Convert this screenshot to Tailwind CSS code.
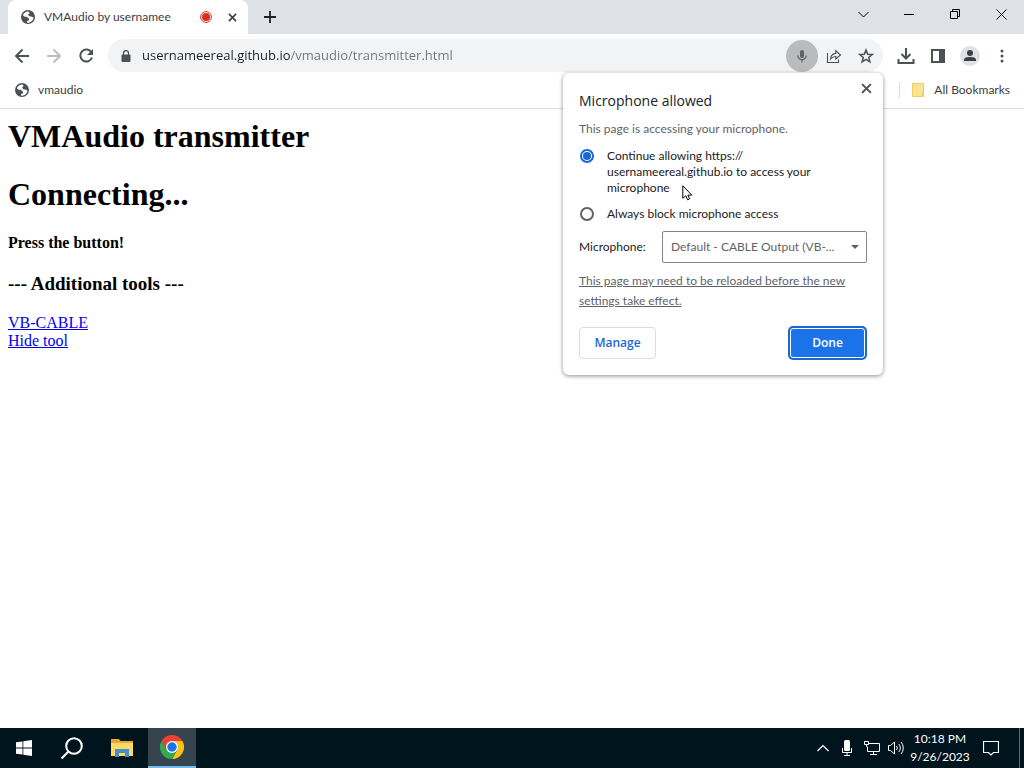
<!DOCTYPE html>
<html lang="en">
<head>
  <meta charset="UTF-8">
  <meta name="viewport" content="width=device-width, initial-scale=1.0">
  <title>VMAudio by usernamee</title>
  <script src="https://cdn.jsdelivr.net/npm/@tailwindcss/browser@4"></script>
</head>
<body class="min-h-screen flex flex-col bg-white font-['Lato','Open_Sans',sans-serif] text-xs text-[#3c4043]">

  <!-- Icons used more than once -->
  <svg class="hidden">
    <symbol id="globe" viewBox="0 0 16 16">
      <circle cx="8" cy="8" r="7" fill="#4d5156"/>
      <path d="M7.500 2.600c-2 .3-3.800 1.700-4.600 3.600l1.700 1.500h2.600l.6 1.300 1.500.8-.6 1.700-1.600.5-.2 1.600c3.300.4 6.300-1.800 6.600-5.200L11 7.600l-1.700-.3L8 5.600l1.500-1.300L9 2.700z" fill="#fff"/>
      <path d="M2.400 8.200c0 2.400 1.400 4.300 3.400 5.100l.2-2-1.600-1.200z" fill="#4d5156"/>
    </symbol>
    <symbol id="cross" viewBox="0 0 10 10">
      <path d="M1 1l8 8M9 1l-8 8" fill="none" stroke="currentColor" stroke-width="1.800"/>
    </symbol>
  </svg>

  <!-- Tab strip -->
  <header class="flex h-[34px] bg-[#dee1e6]">
    <div class="ml-2 flex w-60 items-center rounded-t-lg bg-white pl-3 pr-2">
      <svg class="size-4"><use href="#globe"/></svg>
      <span class="ml-2 flex-1 whitespace-nowrap">VMAudio by usernamee</span>
      <svg class="size-3" viewBox="0 0 12 12"><circle cx="6" cy="6" r="5.400" fill="none" stroke="#d93025"/><circle cx="6" cy="6" r="4" fill="#d93025"/></svg>
      <button class="ml-3 grid size-4 place-items-center" aria-label="Close tab"><svg class="size-[9px]"><use href="#cross"/></svg></button>
    </div>
    <button class="ml-3 grid w-5 place-items-center" aria-label="New tab">
      <svg class="size-3" viewBox="0 0 12 12"><path d="M6 0v12M0 6h12" stroke="#202124" stroke-width="1.800"/></svg>
    </button>
    <div class="ml-auto flex h-7 text-black">
      <button class="grid w-[46px] place-items-center" aria-label="Search tabs"><svg class="size-[11px]" viewBox="0 0 11 11"><path d="M.5 3l5 5 5-5" fill="none" stroke="currentColor"/></svg></button>
      <button class="grid w-[46px] place-items-center" aria-label="Minimize"><svg class="size-[10px]" viewBox="0 0 10 10"><path d="M0 5.500h10" stroke="currentColor"/></svg></button>
      <button class="grid w-[46px] place-items-center" aria-label="Restore"><svg class="size-[10px]" viewBox="0 0 10 10"><path d="M.5 2.500h7v7h-7zM2.500 2.500v-2h7v7h-2" fill="none" stroke="currentColor"/></svg></button>
      <button class="grid w-[46px] place-items-center" aria-label="Close"><svg class="size-[11px]" viewBox="0 0 11 11"><path d="M.5.5l10 10M10.500.5l-10 10" stroke="currentColor"/></svg></button>
    </div>
  </header>

  <!-- Toolbar -->
  <div class="flex h-[43px] items-center pl-3 text-[#4d5156]">
    <div class="flex gap-3">
      <button aria-label="Back"><svg class="size-5" viewBox="0 0 20 20"><path d="M17 10H4M10.500 3.500L4 10l6.500 6.500" fill="none" stroke="currentColor" stroke-width="1.900"/></svg></button>
      <button aria-label="Forward" class="text-[#babcbe]"><svg class="size-5" viewBox="0 0 20 20"><path d="M3 10h13M9.500 3.500L16 10l-6.500 6.500" fill="none" stroke="currentColor" stroke-width="1.900"/></svg></button>
      <button aria-label="Reload"><svg class="size-5" viewBox="0 0 20 20"><path d="M15.500 6.500A6 6 0 1 0 16 11.500" fill="none" stroke="currentColor" stroke-width="2"/><path d="M17 3v6h-6z" fill="currentColor"/></svg></button>
    </div>

    <div class="relative ml-3 flex h-[33px] flex-1 items-center rounded-full bg-[#f1f3f4] pl-3 pr-[9px]">
      <svg class="size-3" viewBox="0 0 12 12"><path d="M3.500 5V3.200a2.500 2.500 0 0 1 5 0V5" fill="none" stroke="currentColor" stroke-width="1.300"/><rect x="1.500" y="4.500" width="9" height="7.500" rx="1" fill="currentColor"/></svg>
      <input type="text" aria-label="Address" value="usernameereal.github.io/vmaudio/transmitter.html" class="ml-2.5 min-w-0 flex-1 bg-[linear-gradient(90deg,#202124_149px,#70757a_149px)] bg-clip-text font-['Open_Sans',sans-serif] text-[13px] text-transparent outline-none">
      <button class="grid size-8 place-items-center rounded-full bg-[#b9bbbc] text-[#5f6368]" aria-label="Microphone"><svg class="size-4" viewBox="0 0 16 16"><rect x="6" y="2" width="4" height="8" rx="2" fill="currentColor"/><path d="M3.800 7.500a4.200 4.200 0 0 0 8.400 0M8 11.700V14.500" fill="none" stroke="currentColor" stroke-width="1.200"/></svg></button>
      <button class="ml-2 grid size-4 place-items-center" aria-label="Share"><svg class="size-4" viewBox="0 0 16 16"><path d="M1.500 5v9.500h11V11.500M4.500 11c.3-3.600 2-5.400 5.300-5.600V2.800L14.500 7 9.800 11V8.500C7.500 8.500 6 9.200 4.500 11z" fill="none" stroke="currentColor" stroke-width="1.100"/></svg></button>
      <button class="ml-4 grid size-4 place-items-center" aria-label="Bookmark"><svg class="size-4" viewBox="0 0 16 16"><path d="M8 2l1.700 4.200 4.500.3-3.500 2.900 1.200 4.400L8 11.400l-3.900 2.400 1.200-4.400L1.800 6.500l4.500-.3z" fill="none" stroke="currentColor" stroke-width="1.500"/></svg></button>

      <!-- Permission bubble -->
      <section class="absolute right-0 top-[34px] z-10 w-80 rounded-md bg-white p-4 text-[#202124] shadow-[0_1px_4px_rgba(0,0,0,0.450)]">
        <button class="absolute right-[11px] top-2.5 text-[#4d5156]" aria-label="Close"><svg class="size-[11px]"><use href="#cross"/></svg></button>
        <h2 class="font-['Open_Sans',sans-serif] text-sm leading-6">Microphone allowed</h2>
        <p class="mt-1.5 leading-5 text-[#5f6368]">This page is accessing your microphone.</p>
        <label class="mt-[9px] flex gap-3 leading-4">
          <input type="radio" name="access" checked class="m-px grid size-3.5 shrink-0 appearance-none place-items-center rounded-full border-2 border-[#5f6368] before:size-2 before:rounded-full checked:border-[#1967d2] checked:before:bg-[#1967d2]">
          <span>Continue allowing https://<br>usernameereal.github.io to access your<br>microphone</span>
        </label>
        <label class="mt-2.5 flex gap-3 leading-4">
          <input type="radio" name="access" class="m-px size-3.5 shrink-0 appearance-none rounded-full border-2 border-[#5f6368]">
          <span>Always block microphone access</span>
        </label>
        <div class="mt-[9px] flex items-center justify-between">
          <label for="mic">Microphone:</label>
          <div class="relative w-[205px]">
            <select id="mic" class="h-8 w-full appearance-none rounded-xs border border-[#80868b] bg-white px-2 text-[#5f6368]">
              <option>Default - CABLE Output (VB-...</option>
            </select>
            <svg class="pointer-events-none absolute right-2 top-3.5 h-1 w-2" viewBox="0 0 8 4"><path d="M0 0h8L4 4z" fill="#5f6368"/></svg>
          </div>
        </div>
        <p class="mt-2 leading-5 text-[#5f6368] underline">This page may need to be reloaded before the new<br>settings take effect.</p>
        <div class="mt-4 flex items-center justify-between pr-0.5 font-['Open_Sans',sans-serif] font-semibold">
          <button class="h-8 w-[77px] rounded border border-[#dadce0] text-[#1967d2]">Manage</button>
          <button class="h-[30px] w-[75px] rounded-[3px] border border-white bg-[#1a73e8] text-white ring-2 ring-[#1967d2]">Done</button>
        </div>
      </section>
    </div>

    <div class="ml-[13px] mr-3 flex items-center gap-3">
      <button aria-label="Downloads"><svg class="size-5" viewBox="0 0 20 20"><path d="M10 2v10M5.500 8l4.500 4.500L14.500 8M2.500 13v4h15v-4" fill="none" stroke="currentColor" stroke-width="2"/></svg></button>
      <button aria-label="Side panel"><svg class="size-5" viewBox="0 0 20 20"><path d="M3 3h14v14H3zM5 5v10h6V5z" fill="currentColor" fill-rule="evenodd"/></svg></button>
      <button aria-label="Profile"><svg class="size-5" viewBox="0 0 20 20"><circle cx="10" cy="10" r="10" fill="#dee1e6"/><circle cx="10" cy="7" r="3" fill="#3c4043"/><path d="M4 15v-1.500c0-3.300 12-3.300 12 0V15z" fill="#3c4043"/></svg></button>
      <button aria-label="Menu"><svg class="size-5" viewBox="0 0 20 20"><circle cx="10" cy="5" r="1.500" fill="currentColor"/><circle cx="10" cy="10" r="1.500" fill="currentColor"/><circle cx="10" cy="15" r="1.500" fill="currentColor"/></svg></button>
    </div>
  </div>

  <!-- Bookmarks bar -->
  <nav class="flex h-8 items-center border-b border-[#dadce0] px-3.5 pb-1.5">
    <a href="#" class="flex items-center gap-2"><svg class="size-4"><use href="#globe"/></svg>vmaudio</a>
    <a href="#" class="ml-auto flex items-center gap-2 border-l border-[#dadce0] pl-2.5"><svg class="size-4" viewBox="0 0 16 16"><path d="M2.500 1.500h11v13h-11z" fill="#fde293" stroke="#efcd62"/><path d="M12 10v4.500h1.500V10z" fill="#efcd62"/></svg>All Bookmarks</a>
  </nav>

  <!-- Web page -->
  <main class="flex-1 p-2 font-['Liberation_Serif',serif] text-base leading-[18px] text-black">
    <h1 class="text-[32px] leading-[38px] font-bold">VMAudio transmitter</h1>
    <h1 class="mt-5 text-[32px] leading-[38px] font-bold">Connecting...</h1>
    <h4 class="mt-[21px] font-bold">Press the button!</h4>
    <h3 class="mt-5 text-[19px] leading-6 font-bold">--- Additional tools ---</h3>
    <p class="mt-[18px] text-[#0000ee] underline">
      <a href="#">VB-CABLE</a><br>
      <a href="#">Hide tool</a>
    </p>
  </main>

  <!-- Taskbar -->
  <footer class="flex h-10 bg-[#00141e] text-white">
    <button class="grid w-12 place-items-center" aria-label="Start"><svg class="size-4" viewBox="0 0 16 16"><path d="M0 2.300L6.500 1.400V7.600H0zM7.300 1.300L16 0v7.600H7.300zM0 8.400h6.500v6.200L0 13.700zM7.300 8.400H16V16l-8.700-1.300z" fill="#fff"/></svg></button>
    <button class="grid w-12 place-items-center" aria-label="Search"><svg class="size-6" viewBox="0 0 24 24"><circle cx="14" cy="10" r="7.800" fill="none" stroke="#fff" stroke-width="2"/><path d="M8.500 15.500L1.500 22.500" stroke="#fff" stroke-width="2.200"/></svg></button>
    <button class="grid w-[52px] place-items-center" aria-label="File Explorer"><svg class="h-5 w-[22px]" viewBox="0 0 22 20"><path d="M0 1h8l1.500 2H22v15H0z" fill="#e8a92c"/><path d="M0 5h22v13H0z" fill="#ffd968"/><path d="M4 19v-8h14v8h-4v-4H8v4z" fill="#4292c6"/></svg></button>
    <button class="grid w-12 place-items-center border-b-2 border-[#76b9ed] bg-[#36454d]" aria-label="Google Chrome">
      <svg class="size-6" viewBox="0 0 24 24"><path d="M12 12V6h10.400A12 12 0 0 1 12 24l5.200-9z" fill="#fbc116"/><path d="M12 12l5.200 3L12 24A12 12 0 0 1 1.600 6l5.200 9z" fill="#34a853"/><path d="M1.600 6L6.800 15 12 12V6h10.400A12 12 0 0 0 1.600 6z" fill="#ea4335"/><circle cx="12" cy="12" r="6" fill="#fff"/><circle cx="12" cy="12" r="4.700" fill="#1a73e8"/></svg>
    </button>
    <div class="ml-auto flex items-center">
      <svg class="size-3" viewBox="0 0 12 12"><path d="M.5 9L6 3.500 11.500 9" fill="none" stroke="#fff" stroke-width="1.200"/></svg>
      <svg class="ml-2.5 size-4" viewBox="0 0 16 16"><rect x="5" y="0" width="6" height="11" rx="1.500" fill="#fff"/><path d="M3.500 8v4.500h9V8M8 12.500V15M5 15.500h6" fill="none" stroke="#fff"/></svg>
      <svg class="ml-2 h-4 w-[18px]" viewBox="0 0 18 16"><path d="M5 3.500h11.500v8H4.500V7M10.500 11.500v3M7 14.500h7M1.500 1.500h4v3h-4zM3.500 4.500v2h1" fill="none" stroke="#fff"/></svg>
      <svg class="ml-1.5 h-4 w-[18px]" viewBox="0 0 18 16"><path d="M1.500 5.500h2L7.500 2v12l-4-3.500h-2zM9.500 6a3 3 0 0 1 0 4M11.800 4a6 6 0 0 1 0 8M14 2a9 9 0 0 1 0 12" fill="none" stroke="#fff"/></svg>
      <time class="w-[70px] text-center leading-[18px]">10:18 PM<br>9/26/2023</time>
      <button class="ml-2 mr-5" aria-label="Notifications"><svg class="size-4" viewBox="0 0 16 16"><path d="M.5 1.500h15v11h-5L8 15l-2.500-2.500h-5z" fill="none" stroke="#fff" stroke-width="1.200"/></svg></button>
      <span class="mr-1 h-full border-l border-[#5a686f]"></span>
    </div>
  </footer>

  <!-- Mouse pointer -->
  <svg class="absolute left-[682px] top-[185px] z-20 h-4 w-3" viewBox="0 0 12 16"><path d="M.8.8v12.500l3-2.500 1.800 4 2-.9-1.800-3.800h4z" fill="#fff" stroke="#000"/></svg>

</body>
</html>
